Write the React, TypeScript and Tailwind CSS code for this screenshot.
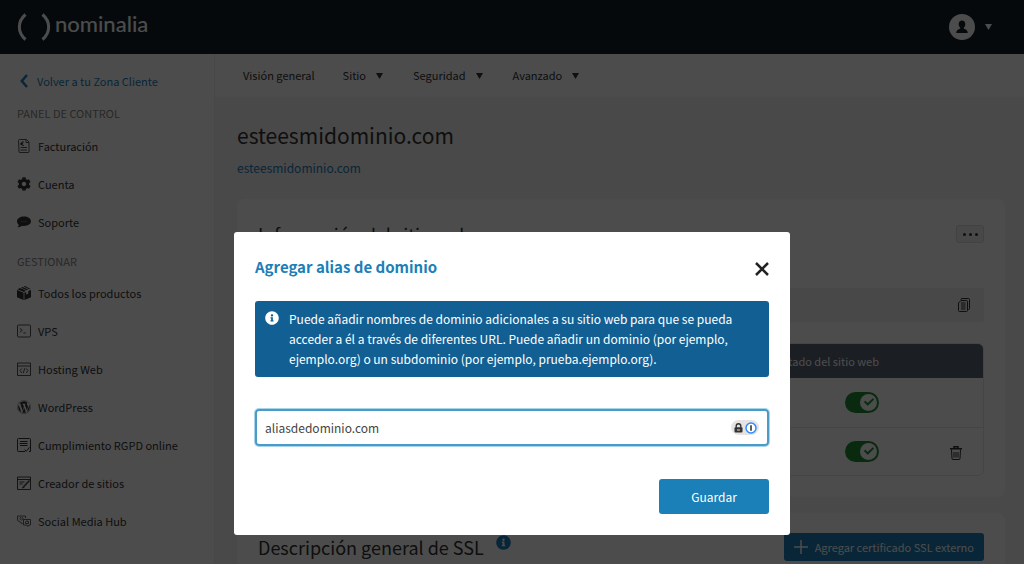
import { useState } from "react"
import type { ReactNode } from "react"
import { FaCheck, FaCog, FaInfoCircle, FaWordpress } from "react-icons/fa"

const stroke = { fill: "none", stroke: "currentColor", strokeWidth: 1 }

function InvoiceIcon() {
    return (
        <svg viewBox="0 0 14 14" className="w-3.5 h-3.5 text-[#555]" {...stroke}>
            <path d="M1.5 1.5a1 1 0 0 1 1-1h7l2.500 2.500v9.500a1 1 0 0 1-1 1h-8a1 1 0 0 1-1-1z" />
            <path d="M9 .5v3h3M3.500 8.500h6.500M3.500 11h6.500" />
            <path d="M6.800 3.200a1.600 1.800 0 1 0 0 3M3.500 4.300h2.500M3.500 5.300h2" stroke="#222" />
        </svg>
    )
}

function ChatIcon() {
    return (
        <svg viewBox="0 0 14 14" className="w-3.5 h-3.5">
            <path fill="currentColor" d="M7 1.500c3.900 0 7 2.100 7 4.800S10.900 11 7 11c-.8 0-1.500-.1-2.200-.2C3.600 11.800 2 12.300.4 12.300c.8-.8 1.300-1.600 1.400-2.400C.7 9 0 7.700 0 6.300 0 3.600 3.100 1.500 7 1.500z" />
            <path d="M4 6.500h6" stroke="#777" strokeWidth="1" strokeDasharray="1.500 .7" />
        </svg>
    )
}

function BoxIcon() {
    return (
        <svg viewBox="0 0 14 14" className="w-3.5 h-3.5">
            <path fill="currentColor" d="M0 4l6.600 2.700V14L0 11.200zM14 4v7.200L7.400 14V6.700l1.800-.7v2.500l2-.8V5.100zM.4 3.200L3 2.100l5.800 2.500L7 5.900zM4 1.700L5.600 1l5.700 2.500-1.500.7zM6.600.6L8 .1l5.600 2.900-1.300.2z" />
        </svg>
    )
}

function TerminalIcon() {
    return (
        <svg viewBox="0 0 14 14" className="w-3.5 h-3.5 text-[#555]" {...stroke}>
            <rect x=".5" y="1" width="13" height="12" rx="1" />
            <path d="M2.800 4.300L5.300 6.300 2.800 8.300M6.300 9h2.500" />
        </svg>
    )
}

function CodeWindowIcon() {
    return (
        <svg viewBox="0 0 14 14" className="w-3.5 h-3.5 text-[#555]" {...stroke}>
            <path d="M.5 1h13v12.500H.5zM.5 4h13" />
            <path d="M4.800 6.500L3 8.700l1.800 2.200M9.200 6.500L11 8.700l-1.800 2.200M7.800 6.200l-1.600 5" />
        </svg>
    )
}

function ComplianceIcon() {
    return (
        <svg viewBox="0 0 14 14" className="w-3.5 h-3.5" {...stroke}>
            <path d="M8 13.500H1.500a1 1 0 0 1-1-1v-11a1 1 0 0 1 1-1h11a1 1 0 0 1 1 1v12H12" />
            <path d="M3 3.500h7.500M2.500 5.500h8M3 7.500h7.500M7.500 11.500l1.800 1.800 3.200-4" />
        </svg>
    )
}

function BuilderIcon() {
    return (
        <svg viewBox="0 0 14 14" className="w-3.5 h-3.5 text-[#444]" {...stroke}>
            <path d="M.5 1h13v12.500H.5zM.5 3.500h13M2.500 6h5M2.500 8h3" />
            <path strokeWidth="1.600" d="M12.500 4.500L6.800 10.500" />
            <path d="M6.500 10l-1 2 2-.8" />
        </svg>
    )
}

function SocialIcon() {
    return (
        <svg viewBox="0 0 14 14" className="w-3.5 h-3.5 text-[#666]" {...stroke}>
            <path d="M6 8.500L4.500 10 4 8.500 .5 6.500V2h8v2" />
            <path d="M4.500 6.300L2.800 4.600c0-1.200 1.400-1.200 1.700-.4.300-.8 1.700-.8 1.700.4z" />
            <path d="M6.500 5.500h7v5.500H12l-1 1.500-1-1.500H6.500z" />
            <path d="M8.500 9.500V8l1.500-1.500v1h1.500v2z" />
        </svg>
    )
}

function CopyIcon() {
    return (
        <svg viewBox="0 0 12 14" className="w-3 h-3.5" {...stroke}>
            <path d="M3 2V1.500a1 1 0 0 1 1-1h6.500a1 1 0 0 1 1 1V10.500a1 1 0 0 1-1 1H10" />
            <path d="M3 2.500h5.500a1 1 0 0 1 1 1v9a1 1 0 0 1-1 1h-7a1 1 0 0 1-1-1V5z" />
            <path d="M3 5h4.500M3 7h4.500M3 9h4.500M3 11h4.500" />
        </svg>
    )
}

function TrashIcon() {
    return (
        <svg viewBox="0 0 12 14" className="w-3 h-3.5" {...stroke}>
            <path d="M1.500 3.500l.5 9a1 1 0 0 0 1 1h6a1 1 0 0 0 1-1l.5-9M4 6v5.500M6 6v5.500M8 6v5.500" />
            <path strokeWidth="1.500" d="M0 2.800h12M4 2.300V.8h4v1.500" />
        </svg>
    )
}

function Caret() {
    return (
        <svg viewBox="0 0 7 6" className="w-[7px] h-1.5" fill="currentColor">
            <path d="M0 0h7L3.500 6z" />
        </svg>
    )
}

function NavItem({ icon, label }: { icon: ReactNode; label: string }) {
    return (
        <a href="#" className="flex items-center gap-[7px] h-[38px] text-[11px] text-[#333]">
            {icon}
            {label}
        </a>
    )
}

function Toggle({ label }: { label: string }) {
    return (
        <label className="inline-flex align-middle relative">
            <input
                type="checkbox"
                defaultChecked
                aria-label={label}
                className="appearance-none w-[34px] h-[21px] rounded-full bg-[#1e8e34]"
            />
            <span className="absolute right-[2px] top-[2px] w-[17px] h-[17px] rounded-full bg-white flex items-center justify-center text-[#1e8e34]">
                <FaCheck className="w-2.5 h-2.5" />
            </span>
        </label>
    )
}

const account = [
    { icon: <InvoiceIcon />, label: "Facturación" },
    { icon: <FaCog className="w-3.5 h-3.5" />, label: "Cuenta" },
    { icon: <ChatIcon />, label: "Soporte" },
]

const products = [
    { icon: <BoxIcon />, label: "Todos los productos" },
    { icon: <TerminalIcon />, label: "VPS" },
    { icon: <CodeWindowIcon />, label: "Hosting Web" },
    { icon: <FaWordpress className="w-3.5 h-3.5" />, label: "WordPress" },
    { icon: <ComplianceIcon />, label: "Cumplimiento RGPD online" },
    { icon: <BuilderIcon />, label: "Creador de sitios" },
    { icon: <SocialIcon />, label: "Social Media Hub" },
]

function Header() {
    return (
        <header className="h-[54px] shrink-0 bg-[#14212b] flex items-center justify-between pl-[17px] pr-8 text-white">
            <a href="#" className="flex items-center gap-1">
                <svg viewBox="0 0 34 28" className="w-[34px] h-7" fill="none" stroke="currentColor" strokeWidth="3">
                    <path d="M8.500 1.500C.3 8.500.3 19.500 8.500 26.500M25.500 1.500c8.200 7 8.200 18 0 25" />
                </svg>
                <span className="font-['Lato'] font-medium text-[22px] leading-6 pb-1.5">nominalia</span>
            </a>
            <button aria-label="Cuenta de usuario" className="flex items-center gap-2.5">
                <svg viewBox="0 0 26 26" className="w-[26px] h-[26px]">
                    <circle cx="13" cy="13" r="13" fill="#fff" />
                    <path fill="#14212b" d="M13 6.500c2 0 3.300 1.500 3.300 3.500 0 1.600-.6 3-1.500 3.700v1.100c2.500.7 4 1.800 4 4.200H7.200c0-2.400 1.500-3.500 4-4.200v-1.100C10.300 13 9.700 11.600 9.700 10c0-2 1.300-3.500 3.300-3.500z" />
                </svg>
                <Caret />
            </button>
        </header>
    )
}

function Sidebar() {
    return (
        <aside className="w-[215px] shrink-0 bg-white border-r border-[#eee] pl-[17px] pt-[15px]">
            <a href="#" className="flex items-center gap-[9px] h-6 pl-[3px] text-[11px] text-[#1b80b8]">
                <svg viewBox="0 0 8 14" className="w-2 h-3.5" fill="none" stroke="currentColor" strokeWidth="2.500">
                    <path d="M7 1L1.800 7 7 13" />
                </svg>
                Volver a tu Zona Cliente
            </a>
            <h2 className="mt-2.5 h-5 leading-5 text-[11px] text-[#888]">PANEL DE CONTROL</h2>
            <nav className="pt-1 pb-2.5">
                {account.map((item) => (
                    <NavItem key={item.label} {...item} />
                ))}
            </nav>
            <h2 className="h-5 leading-5 text-[11px] text-[#888]">GESTIONAR</h2>
            <nav className="pt-[3px]">
                {products.map((item) => (
                    <NavItem key={item.label} {...item} />
                ))}
            </nav>
        </aside>
    )
}

function SiteInfo() {
    return (
        <section className="mt-[19px] rounded-lg bg-white p-[21px]">
            <div className="flex items-center justify-between h-7">
                <h2 className="text-[18px] text-[#333]">Información del sitio web</h2>
                <button aria-label="Más opciones" className="w-7 h-[18px] rounded-[3px] border border-[#ddd] bg-[#f2f2f2] flex items-center justify-center gap-[3px] text-[#333]">
                    <span className="w-[3px] h-[3px] rounded-full bg-current" />
                    <span className="w-[3px] h-[3px] rounded-full bg-current" />
                    <span className="w-[3px] h-[3px] rounded-full bg-current" />
                </button>
            </div>
            <div className="mt-10 h-[34px] rounded-[3px] bg-[#f0f0f0] flex items-center justify-end pr-3.5 text-[#333]">
                <button aria-label="Copiar"><CopyIcon /></button>
            </div>
            <div className="mt-[21px] rounded-md border border-[#e8e8e8] overflow-hidden">
                <table className="w-full text-[11px]">
                    <thead className="bg-[#5c6575] text-white">
                        <tr className="h-[34px]">
                            <th />
                            <th className="text-right font-normal">Estado del sitio web</th>
                            <th className="w-[104px]" />
                        </tr>
                    </thead>
                    <tbody>
                        <tr className="h-[49px] border-b border-[#e8e8e8]">
                            <td />
                            <td className="text-right"><Toggle label="Estado del sitio web" /></td>
                            <td />
                        </tr>
                        <tr className="h-12">
                            <td />
                            <td className="text-right"><Toggle label="Estado del alias" /></td>
                            <td className="pr-[21px] text-right text-[#333]">
                                <button aria-label="Eliminar" className="align-middle"><TrashIcon /></button>
                            </td>
                        </tr>
                    </tbody>
                </table>
            </div>
        </section>
    )
}

function SslOverview() {
    return (
        <section className="mt-4 rounded-lg bg-white px-[21px] py-5 flex items-start justify-between">
            <h2 className="flex items-start gap-3 text-[18px] leading-7 text-[#333]">
                Descripción general de SSL
                <FaInfoCircle className="mt-0.5 w-[15px] h-[15px] text-[#1b80b8]" />
            </h2>
            <button className="h-7 rounded-[3px] bg-[#1b80b8] px-2.5 flex items-center gap-[7px] text-[11px] text-white">
                <svg viewBox="0 0 14 14" className="w-3.5 h-3.5" fill="none" stroke="currentColor" strokeWidth="1.500">
                    <path d="M7 0v14M0 7h14" />
                </svg>
                Agregar certificado SSL externo
            </button>
        </section>
    )
}

function AliasModal({ onClose }: { onClose: () => void }) {
    const [alias, setAlias] = useState("aliasdedominio.com")

    return (
        <div className="fixed inset-0 z-50 bg-black/70 flex items-start justify-center pt-[232px]">
            <div role="dialog" aria-labelledby="alias-title" className="w-full max-w-[556px] rounded-[3px] bg-white p-[21px]">
                <div className="flex items-start justify-between h-7">
                    <h2 id="alias-title" className="font-bold text-[15px] leading-7 text-[#1b80b8]">Agregar alias de dominio</h2>
                    <button onClick={onClose} aria-label="Cerrar" className="pt-[9px] text-[#222]">
                        <svg viewBox="0 0 14 14" className="w-3.5 h-3.5" fill="none" stroke="currentColor" strokeWidth="2.500">
                            <path d="M1 1l12 12M13 1L1 13" />
                        </svg>
                    </button>
                </div>

                <div className="mt-5 rounded-[3px] bg-[#125f94] pl-2.5 pr-4 py-2 flex gap-2.5 text-white">
                    <FaInfoCircle className="mt-0.5 w-3.5 h-3.5 shrink-0" />
                    <p className="text-[12px] leading-5">
                        Puede añadir nombres de dominio adicionales a su sitio web para que se pueda acceder a él a través de diferentes URL. Puede añadir un dominio (por ejemplo, ejemplo.org) o un subdominio (por ejemplo, prueba.ejemplo.org).
                    </p>
                </div>

                <div className="mt-8 flex items-center h-[37px] rounded-[4px] border-2 border-[#4c9bc6] ring-1 ring-[#a9d5ec] pl-2 pr-2">
                    <input
                        type="text"
                        aria-label="Alias de dominio"
                        value={alias}
                        onChange={(e) => setAlias(e.target.value)}
                        className="flex-1 min-w-0 text-[12px] text-[#444] outline-none"
                    />
                    {/* password manager badge */}
                    <span className="w-7 h-[15px] rounded-full bg-[#e6e4e2] flex items-center justify-center gap-[2px]">
                        <svg viewBox="0 0 9 10" className="w-[9px] h-2.5">
                            <path d="M2.200 5V3a2.300 2.300 0 0 1 4.600 0v2" fill="none" stroke="#333" strokeWidth="1.400" />
                            <rect x=".5" y="4.300" width="8" height="5.200" rx="1" fill="#333" />
                            <path d="M3 7h3" stroke="#ddd" strokeWidth="1" />
                        </svg>
                        <svg viewBox="0 0 12 12" className="w-3 h-3">
                            <circle cx="6" cy="6" r="5" fill="#fff" stroke="#2d8cff" strokeWidth="1.500" />
                            <path d="M6 3.200v5.600" stroke="#333" strokeWidth="1.600" />
                        </svg>
                    </span>
                </div>

                <div className="mt-[33px] flex justify-end">
                    <button className="w-[110px] h-[35px] rounded-[3px] bg-[#1b80b8] text-[12px] text-white">Guardar</button>
                </div>
            </div>
        </div>
    )
}

export default function App() {
    const [open, setOpen] = useState(true)

    return (
        <div className="h-screen overflow-hidden flex flex-col bg-[#f4f4f4] font-['Noto_Sans_CJK_SC','Noto_Sans',sans-serif]">
            <Header />
            <div className="flex flex-1 min-h-0">
                <Sidebar />
                <main className="flex-1 min-w-0">
                    <nav className="h-[43px] bg-white pl-7 flex items-center gap-7 text-[11px] text-[#333]">
                        <a href="#">Visión general</a>
                        <button className="flex items-center gap-2.5 pr-0.5">Sitio <Caret /></button>
                        <button className="flex items-center gap-2.5 pr-0.5">Seguridad <Caret /></button>
                        <button className="flex items-center gap-2.5 pr-0.5">Avanzado <Caret /></button>
                    </nav>
                    <div className="pl-[22px] pr-[19px] pt-[22px]">
                        <h1 className="text-[21px] leading-8 text-[#333]">esteesmidominio.com</h1>
                        <a href="#" className="mt-[5px] block text-[12px] leading-6 text-[#1b80b8]">esteesmidominio.com</a>
                        <SiteInfo />
                        <SslOverview />
                    </div>
                </main>
            </div>
            {open && <AliasModal onClose={() => setOpen(false)} />}
        </div>
    )
}
